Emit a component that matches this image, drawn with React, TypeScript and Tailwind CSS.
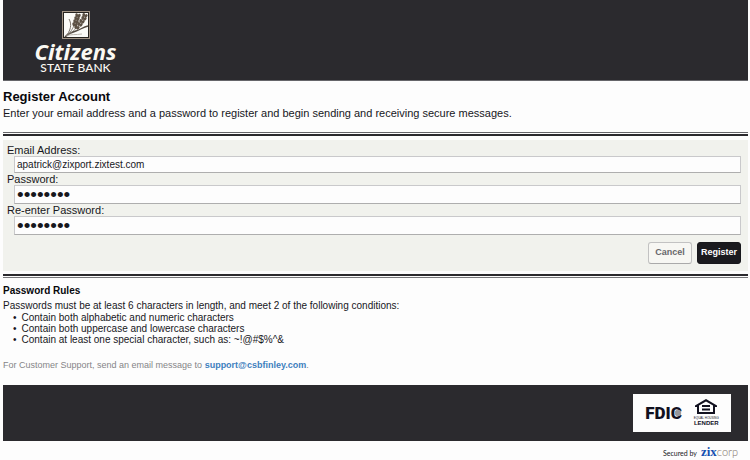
import type { ReactNode } from "react";

const leftGrains = [
  [16, 4], [15, 7], [14, 10], [13, 13],
];
const rightGrains = [
  [23, 4], [22, 7], [20, 10], [18, 13], [15, 16],
];

function WheatMark() {
  return (
    <svg viewBox="0 0 28 28" className="block size-7" aria-hidden="true">
      <rect width="28" height="28" fill="#a19385" />
      <rect x="1" y="1" width="26" height="26" fill="#27231f" />
      <rect x="2" y="2" width="24" height="24" fill="#fbfaf7" />
      <path d="M3 26C9 20 10 13 7 8" fill="none" stroke="#7b736b" strokeWidth="1" />
      <path d="M3 26C6 23 10 21 14 20C18 19 21 16 26 15" fill="none" stroke="#51483f" strokeWidth="1.3" />
      <path d="M4 25C8 23 14 24 20 23" fill="none" stroke="#bdb7af" strokeWidth="1" />
      <path d="M12 14C11 18 8 22 4 25M16 15C13 19 9 22 4 25" fill="none" stroke="#7b736b" strokeWidth=".8" />
      <g fill="#5c5044">
        {leftGrains.map(([x, y]) => (
          <g key={y} transform={`translate(${x} ${y})`}>
            <ellipse cx="-1.3" cy="0" rx="1.4" ry="2" transform="rotate(-12)" />
            <ellipse cx="1.3" cy="0" rx="1.4" ry="2" transform="rotate(32)" />
          </g>
        ))}
        {rightGrains.map(([x, y]) => (
          <g key={y} transform={`translate(${x} ${y})`}>
            <ellipse cx="-1.3" cy="0" rx="1.4" ry="2" transform="rotate(5)" />
            <ellipse cx="1.3" cy="0" rx="1.4" ry="2" transform="rotate(42)" />
          </g>
        ))}
      </g>
    </svg>
  );
}

function Logo() {
  return (
    <div className="flex w-[145px] flex-col items-center pt-[11px] text-[#fbf9f3]">
      <WheatMark />
      <span className="font-['Noto_Sans',sans-serif] text-[22px] leading-6 font-bold italic">Citizens</span>
      <span className="font-[Lato,sans-serif] text-[12px] leading-[10px] font-medium">STATE BANK</span>
    </div>
  );
}

type FieldProps = { id: string; label: string; type: string; value: string; inputClass: string };

function Field({ id, label, type, value, inputClass }: FieldProps) {
  return (
    <div>
      <label htmlFor={id} className="block pl-1 text-[11px] leading-3 text-[#17171c]">
        {label}
      </label>
      <div className="pr-[7px] pl-[11px]">
        <input
          id={id}
          type={type}
          defaultValue={value}
          className={`block w-full border border-[#c9c9cb] border-b-[#aeaeae] bg-[#fdfdfd] px-[2px] outline-none ${inputClass}`}
        />
      </div>
    </div>
  );
}

function Rule({ children }: { children: ReactNode }) {
  return <li className="flex gap-[5px] before:content-['•']">{children}</li>;
}

function Badges() {
  return (
    <div className="flex h-[38px] w-[98px] items-center justify-center gap-3 bg-[#fdfdfd] text-[#11111f]">
      <div className="relative">
        <span className="block font-[Roboto,sans-serif] text-[17px] leading-5 font-black">FDIC</span>
        <svg viewBox="0 0 8 8" className="absolute top-[6px] right-0 size-2" aria-hidden="true">
          <circle cx="4" cy="4" r="3.2" fill="#a5a5a8" />
          <path d="M1 3h6M1 5h6M3 1v6M5 1v6" stroke="#88888f" strokeWidth=".6" />
        </svg>
      </div>
      <div className="flex flex-col items-center">
        <svg viewBox="0 0 22 16" className="h-4 w-[22px]" aria-hidden="true">
          <path d="M0 6.5 11 0l11 6.5V8h-2v7H2V8H0Z" fill="#11111f" />
          <path d="M4 6.6 11 2.5l7 4.1V13H4Z" fill="#fdfdfd" />
          <path d="M7 6h8v2H7zm0 3.5h8v2H7z" fill="#11111f" />
        </svg>
        <span className="mt-px text-[3px] leading-[4px]">EQUAL HOUSING</span>
        <span className="text-[6px] leading-[7px] font-bold">LENDER</span>
      </div>
    </div>
  );
}

export default function App() {
  return (
    <div className="bg-[#fdfdfd] pr-[2px] pl-[3px] font-['Liberation_Sans',Arial,sans-serif] text-[#17171c]">
      <header className="h-[81px] border-b border-[#66666a] bg-[#2b2a2e]">
        <Logo />
      </header>

      <main>
        <section className="pt-2 pb-[11px]">
          <h1 className="text-[13px] leading-4 font-bold text-[#08080c]">Register Account</h1>
          <p className="text-[11px] leading-4">
            Enter your email address and a password to register and begin sending and receiving secure messages.
          </p>
        </section>

        <div className="h-1 border-t border-b-2 border-t-[#66666a] border-b-[#2b2a2e]" />

        <form className="mt-1 bg-[#f1f2ed] pt-1 pb-[7px]" onSubmit={(e) => e.preventDefault()}>
          <Field id="email" label="Email Address:" type="text" value="apatrick@zixport.zixtest.com" inputClass="h-[17px] text-[10px]" />
          <Field id="password" label="Password:" type="password" value="zixtest1" inputClass="h-[19px] text-[19px] leading-[17px]" />
          <Field id="confirm" label="Re-enter Password:" type="password" value="zixtest1" inputClass="h-[19px] text-[19px] leading-[17px]" />
          <div className="flex justify-end gap-[5px] pt-[7px] pr-[7px]">
            <button type="button" className="h-[22px] w-11 rounded-[3px] border border-[#c2c2c2] border-b-[#aaaaaa] bg-[#f7f7f3] text-[9px] font-bold text-[#67676b]">
              Cancel
            </button>
            <button type="submit" className="h-[22px] w-11 rounded-[3px] border border-[#17171b] bg-[#1a1a1e] text-[9px] font-bold text-[#fdfdfd]">
              Register
            </button>
          </div>
        </form>

        <div className="mt-[3px] h-1 border-t-2 border-b border-t-[#2b2a2e] border-b-[#77777a]" />

        <section className="pt-[7px] text-[10px]">
          <h2 className="leading-3 font-bold text-[#08080c]">Password Rules</h2>
          <p className="mt-[3px] leading-3">Passwords must be at least 6 characters in length, and meet 2 of the following conditions:</p>
          <ul className="pl-[10px] leading-[11px]">
            <Rule>Contain both alphabetic and numeric characters</Rule>
            <Rule>Contain both uppercase and lowercase characters</Rule>
            <Rule>Contain at least one special character, such as: ~!@#$%^&amp;</Rule>
          </ul>
        </section>
        <p className="pt-[14px] pb-[14px] text-[9px] leading-3 text-[#858588]">
          For Customer Support, send an email message to{" "}
          <a href="mailto:support@csbfinley.com" className="font-bold text-[#3d80bd]">
            support@csbfinley.com
          </a>
          .
        </p>
      </main>

      <footer>
        <div className="flex h-14 items-center justify-end bg-[#2b2a2e] pr-[17px]">
          <Badges />
        </div>
        <div className="flex items-baseline justify-end gap-1 pt-[3px] pr-[10px] leading-4">
          <span className="font-[Lato,sans-serif] text-[7px] text-[#17171c]">Secured by</span>
          <a href="#zixcorp" className="flex items-baseline">
            <span className="font-['Liberation_Serif',serif] text-[13px] font-bold text-[#174fb0]">zix</span>
            <span className="font-[Lato,sans-serif] text-[11px] font-light text-[#85736b]">corp</span>
          </a>
        </div>
      </footer>
    </div>
  );
}
